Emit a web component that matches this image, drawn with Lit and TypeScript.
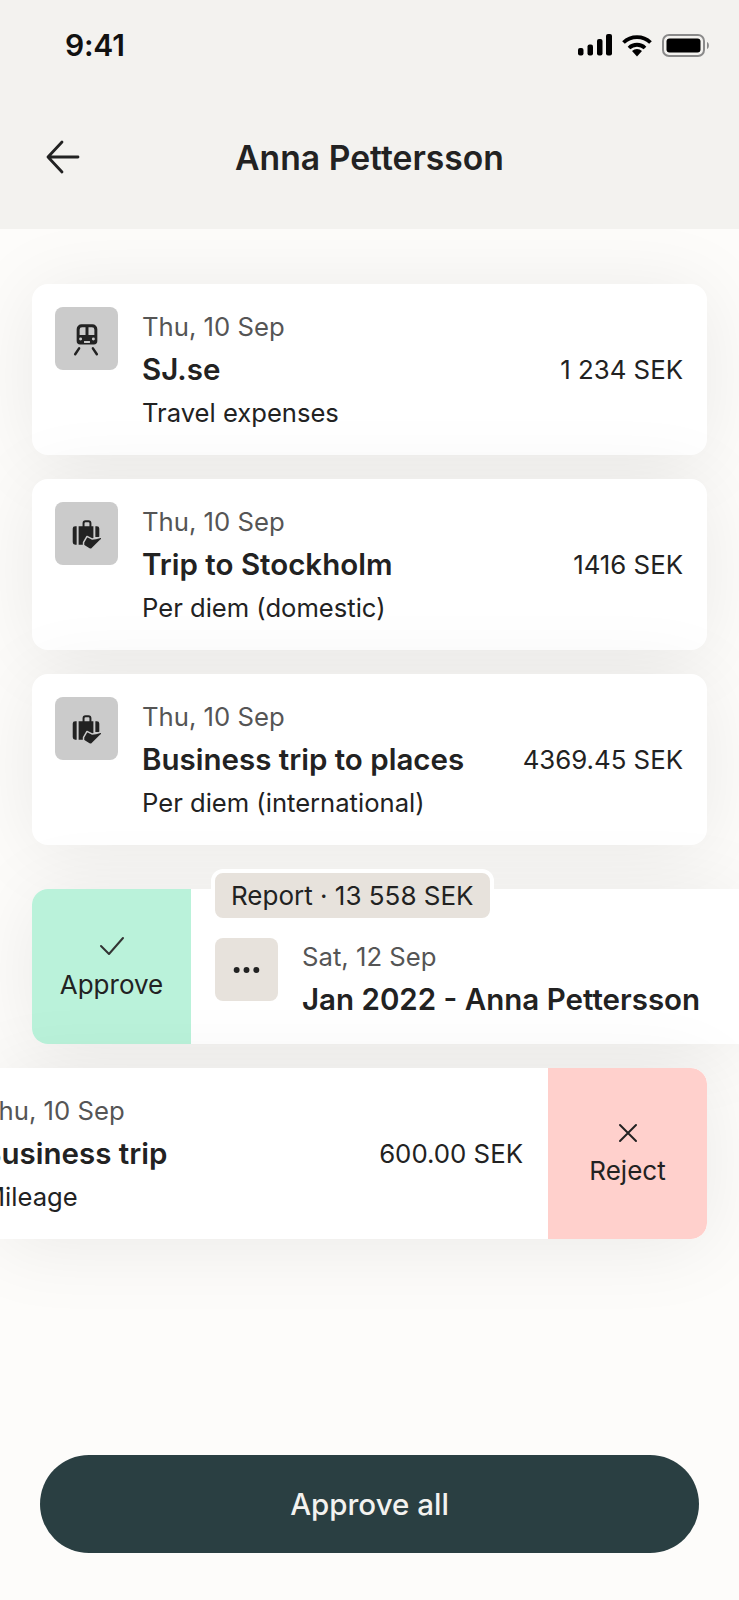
import { LitElement, html, css } from "lit";
import { customElement } from "lit/decorators.js";

const train = html`<svg viewBox="0 0 64 64" width="64" height="64"><path fill="#222" fill-rule="evenodd" d="M27 17h11a5 5 0 0 1 5 5v12a3.500 3.500 0 0 1-3.500 3.500h-14A3.500 3.500 0 0 1 22 34V22a5 5 0 0 1 5-5zM25 22.500V28h6V20h-3.500a2.500 2.500 0 0 0-2.500 2.500zM34 20v8h6v-5.500a2.500 2.500 0 0 0-2.500-2.500zM24.500 32a1.500 1.500 0 1 0 3 0 1.500 1.500 0 1 0-3 0zM37.500 32a1.500 1.500 0 1 0 3 0 1.500 1.500 0 1 0-3 0zM29.500 34h6v2h-6z"/><path stroke="#222" stroke-width="2.500" stroke-linecap="round" d="M24.500 41.500l-4 6M38.500 41.500l4 6" fill="none"/></svg>`;
const bag = html`<svg viewBox="0 0 64 64" width="64" height="64"><g transform="translate(1 1)"><path fill="#222" d="M21 23v19h-1.500a2.500 2.500 0 0 1-2.500-2.500v-14a2.500 2.500 0 0 1 2.500-2.500zM40 23h1.500a2.500 2.500 0 0 1 2.500 2.500V34h-4z"/><path fill="#222" fill-rule="evenodd" d="M23 23h4v-3a3 3 0 0 1 3-3h3a3 3 0 0 1 3 3v3h2v19H23zM29 23h5v-3a1 1 0 0 0-1-1h-3a1 1 0 0 0-1 1z"/><path fill="#222" stroke="#cbcbcb" stroke-width="1.500" stroke-linejoin="round" d="M28 39.500l3.500-6 5 2.500 4-.5 5.500-1.500c1 1 .5 2.500-.8 3.500L36 46.500h-1.500L28 42.500z"/></g></svg>`;
const dots = html`<svg viewBox="0 0 64 64" width="64" height="64"><g fill="#222"><circle cx="22" cy="32" r="3"/><circle cx="32" cy="32" r="3"/><circle cx="42" cy="32" r="3"/></g></svg>`;

@customElement("app-root")
export class AppRoot extends LitElement {
  static styles = css`
    :host { display: block; position: relative; width: 739px; height: 1600px; overflow: hidden; font-family: Inter, "Liberation Sans", sans-serif; color: #222; background: #fdfcfa; }
    .header { height: 229px; background: #f3f2ef; display: flex; flex-direction: column; position: relative; z-index: 1; }
    .status { height: 90px; display: flex; align-items: center; justify-content: space-between; padding: 0 29px 0 65px; }
    .time { font-size: 30px; font-weight: 600; color: #111; margin-top: -1px; letter-spacing: -0.2px; }
    .status-icons { display: flex; align-items: center; gap: 10px; }
    .nav { height: 139px; position: relative; display: flex; align-items: center; justify-content: center; padding-bottom: 5px; box-sizing: border-box; }
    .back { position: absolute; left: 45px; top: 49px; }
    .title { font-size: 33.700px; font-weight: 600; color: #222; }
    .list { display: flex; flex-direction: column; gap: 24px; padding: 55px 32px 0; }
    .card { height: 171px; background: #fff; border-radius: 16px; display: flex; padding: 23px 24px 0 23px; box-sizing: border-box; box-shadow: 0 6px 80px rgba(0,0,0,.08); position: relative; }
    .icon { width: 63px; height: 63px; border-radius: 8px; background: #cbcbcb; flex: none; display: flex; align-items: center; justify-content: center; }
    .text { margin-left: 24px; margin-top: 2px; flex: 1; min-width: 0; display: flex; flex-direction: column; }
    .date { font-size: 25.700px; color: #555; line-height: 36px; white-space: nowrap; }
    .name { font-size: 29.500px; font-weight: 600; line-height: 48px; white-space: nowrap; }
    .sub { font-size: 25.600px; line-height: 40px; white-space: nowrap; }
    .amt { font-size: 25.800px; font-weight: 400; align-self: center; white-space: nowrap; margin-bottom: 24px; }
    .swipe { height: 155px; border-radius: 16px 0 0 16px; margin-right: -32px; display: flex; background: #fff; margin-top: 20px; box-shadow: 0 6px 80px rgba(0,0,0,.08); position: relative; }
    .action { width: 159px; flex: none; display: flex; flex-direction: column; align-items: center; justify-content: center; gap: 10px; font-size: 26px; box-sizing: border-box; }
    .approve { background: #baf2da; border-radius: 16px 0 0 16px; gap: 13px; padding-top: 3px; }
    .reject { background: #ffd0cc; border-radius: 0 16px 16px 0; height: 171px; }
    .tag { position: absolute; left: 179px; top: -20px; background: #e7e2dc; border: 4px solid #fff; border-radius: 12px; font-size: 26px; line-height: 45px; padding: 0 16px; height: 45px; white-space: nowrap; }
    .swipe .inner { display: flex; padding: 49px 0 0 24px; flex: 1; min-width: 0; }
    .swipe .text { margin-top: 1px; }
    .dotbox { background: #e7e2dc; }
    .left-card { height: 171px; margin-left: -32px; display: flex; background: #fff; border-radius: 0 16px 16px 0; box-shadow: 0 6px 80px rgba(0,0,0,.08); position: relative; overflow: hidden; }
    .left-card .inner { flex: 1; min-width: 0; padding: 23px 25px 0 0; display: flex; margin-left: -18px; }
    .left-card .text { margin-left: 0; }
    .bottom { position: absolute; left: 40px; top: 1455px; width: 659px; height: 98px; padding-bottom: 1px; box-sizing: border-box; border-radius: 49px; background: #2a3f42; color: #f3f2ef; display: flex; align-items: center; justify-content: center; font-size: 29.500px; font-weight: 500; }
  `;

  card(icon: unknown, date: string, name: string, sub: string, amt: string) {
    return html`<div class="card"><div class="icon">${icon}</div><div class="text"><div class="date">${date}</div><div class="name">${name}</div><div class="sub">${sub}</div></div><div class="amt">${amt}</div></div>`;
  }

  render() {
    return html`
      <div class="header">
        <div class="status">
          <div class="time">9:41</div>
          <div class="status-icons">
            <svg width="34" height="22" viewBox="0 0 34 22"><g fill="#000"><rect x="0" y="14" width="5.500" height="7.500" rx="2"/><rect x="9.500" y="10.500" width="5.500" height="11" rx="2"/><rect x="19" y="5" width="5.500" height="16.500" rx="2"/><rect x="28" y="0" width="6" height="21.500" rx="2"/></g></svg>
            <svg width="30" height="23" viewBox="0 0 30 23"><path fill="none" stroke="#000" stroke-width="3.800" d="M1.500 8.500a19.500 19.500 0 0 1 27 0M7 14a11.500 11.500 0 0 1 16 0"/><path d="M15 22.500l-5-5.500a7.500 7.500 0 0 1 10 0z" fill="#000"/></svg>
            <svg width="48" height="23" viewBox="0 0 48 23"><rect x="1" y="1" width="41" height="21" rx="6" fill="none" stroke="#8a8a8a" stroke-width="2"/><rect x="4.500" y="4.500" width="34" height="14" rx="3" fill="#000"/><path d="M45 8c2.500 .5 2.500 6.500 0 7z" fill="#8a8a8a"/></svg>
          </div>
        </div>
        <div class="nav">
          <svg class="back" width="36" height="36" viewBox="0 0 36 36"><path fill="none" stroke="#222" stroke-width="2.800" stroke-linecap="round" stroke-linejoin="round" d="M17 3L3 18l14 15M3 18h30"/></svg>
          <div class="title">Anna Pettersson</div>
        </div>
      </div>
      <div class="list">
        ${this.card(train, "Thu, 10 Sep", "SJ.se", "Travel expenses", "1 234 SEK")}
        ${this.card(bag, "Thu, 10 Sep", "Trip to Stockholm", "Per diem (domestic)", "1416 SEK")}
        ${this.card(bag, "Thu, 10 Sep", "Business trip to places", "Per diem (international)", "4369.45 SEK")}
        <div class="swipe">
          <div class="action approve">
            <svg width="26" height="20" viewBox="0 0 26 20"><path fill="none" stroke="#333" stroke-width="2" stroke-linecap="round" stroke-linejoin="round" d="M2 10l8 8L24 2"/></svg>
            <div>Approve</div>
          </div>
          <div class="inner">
            <div class="icon dotbox">${dots}</div>
            <div class="text"><div class="date">Sat, 12 Sep</div><div class="name">Jan 2022 - Anna Pettersson</div></div>
          </div>
          <div class="tag">Report · 13 558 SEK</div>
        </div>
        <div class="left-card">
          <div class="inner">
            <div class="text"><div class="date">Thu, 10 Sep</div><div class="name">Business trip</div><div class="sub">Mileage</div></div>
            <div class="amt">600.00 SEK</div>
          </div>
          <div class="action reject">
            <svg width="24" height="24" viewBox="0 0 24 24"><path fill="none" stroke="#222" stroke-width="2" stroke-linecap="round" d="M4 4l16 16M20 4L4 20"/></svg>
            <div>Reject</div>
          </div>
        </div>
      </div>
      <div class="bottom">Approve all</div>
    `;
  }
}
